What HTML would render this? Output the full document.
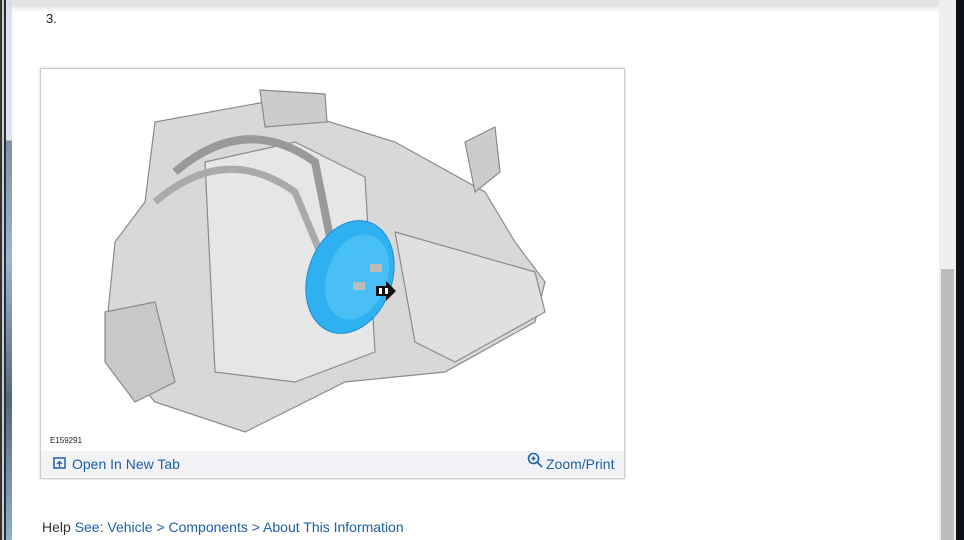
<!DOCTYPE html>
<html><head><style>
body{margin:0;width:964px;height:540px;overflow:hidden;background:#fff;font-family:"Liberation Sans",sans-serif;position:relative}
.a{position:absolute}
</style></head><body>
<div class="a" style="left:0;top:0;width:2px;height:540px;background:#333"></div>
<div class="a" style="left:2px;top:0;width:2px;height:540px;background:#ccc"></div>
<div class="a" style="left:4px;top:0;width:2px;height:540px;background:#2a2f36"></div>
<div class="a" style="left:6px;top:0;width:6px;height:540px;background:linear-gradient(#dde3ea 0,#dde3ea 140px,#7f93a8 141px,#9ab6d2 260px,#56677a 400px,#8fb0cf 540px)"></div>
<div class="a" style="left:12px;top:0;width:928px;height:6px;background:#e2e2e4;box-shadow:0 2px 6px rgba(0,0,0,.15)"></div>
<div class="a" style="left:939px;top:0;width:17px;height:540px;background:#eee"></div>
<div class="a" style="left:941px;top:269px;width:13px;height:271px;background:#bdbdbd"></div>
<div class="a" style="left:956px;top:0;width:8px;height:540px;background:#0d1117"></div>
<div class="a" style="left:46px;top:11px;font-size:13px;color:#222">3.</div>
<div class="a" style="left:40px;top:68px;width:583px;height:409px;border:1px solid #ccc;box-shadow:0 0 2px #ccc;background:#fff"></div>
<svg class="a" style="left:95px;top:82px" width="460" height="360" viewBox="0 0 460 360">
<g fill="#d8d8d8" stroke="#8a8a8a" stroke-width="1.2">
<path d="M60 40 L170 20 L300 60 L390 110 L420 160 L450 200 L440 240 L350 290 L250 300 L150 350 L60 320 L10 260 L20 160 L50 120 Z"/>
<path d="M110 80 L200 60 L270 95 L280 270 L200 300 L120 290 Z" fill="#e6e6e6"/>
<path d="M300 150 L440 190 L450 230 L360 280 L320 260 Z" fill="#e0e0e0"/>
<path d="M165 8 L230 12 L232 40 L170 45 Z" fill="#ccc"/>
<path d="M370 60 L400 45 L405 90 L380 110 Z" fill="#ccc"/>
<path d="M80 90 Q150 30 220 80 L240 180" fill="none" stroke="#999" stroke-width="8"/>
<path d="M60 120 Q130 60 200 110 L225 170" fill="none" stroke="#aaa" stroke-width="7"/>
<path d="M10 230 L60 220 L80 300 L40 320 L10 280Z" fill="#c8c8c8"/>
</g>
<ellipse cx="255" cy="195" rx="42" ry="58" transform="rotate(20 255 195)" fill="#2fb0f0" stroke="#1a8fd0"/>
<ellipse cx="262" cy="195" rx="30" ry="44" transform="rotate(20 262 195)" fill="#48c0f5"/>
<rect x="275" y="182" width="12" height="8" fill="#bbb"/><rect x="258" y="200" width="12" height="8" fill="#bbb"/>
<path d="M281 204 h10 v-5 l10 10 l-10 10 v-5 h-10z" fill="#111"/>
<rect x="284" y="206" width="3" height="6" fill="#fff"/><rect x="290" y="206" width="3" height="6" fill="#fff"/>
</svg>
<div class="a" style="left:50px;top:436px;font-size:8px;color:#222">E159291</div>
<div class="a" style="left:41px;top:451px;width:583px;height:26px;background:#f2f3f6"></div>
<svg class="a" style="left:53px;top:457px" width="13" height="13" viewBox="0 0 13 13"><rect x="1" y="1" width="11" height="10" fill="none" stroke="#1f5ea8" stroke-width="1.5"/><path d="M6.5 10V5M4 7l2.5-2.5L9 7" stroke="#1f5ea8" fill="none" stroke-width="1.3"/></svg>
<div class="a" style="left:72px;top:456px;font-size:14px;color:#1f5ea8">Open In New Tab</div>
<svg class="a" style="left:527px;top:452px" width="17" height="17" viewBox="0 0 17 17"><circle cx="6.5" cy="6.5" r="5" fill="none" stroke="#1f5ea8" stroke-width="1.6"/><path d="M10 10l5 5M4.5 6.5h4M6.5 4.5v4" stroke="#1f5ea8" stroke-width="1.6"/></svg>
<div class="a" style="left:546px;top:456px;font-size:14px;color:#1f5ea8">Zoom/Print</div>
<div class="a" style="left:42px;top:519px;font-size:14px;color:#333">Help <span style="color:#1f5ea8">See: Vehicle &gt; Components &gt; About This Information</span></div>
</body></html>
